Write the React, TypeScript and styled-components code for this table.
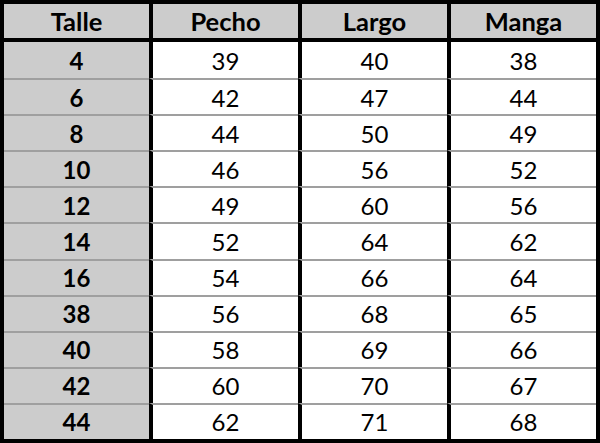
import { createGlobalStyle, styled } from "styled-components";

const sizes = [
  { talle: "4", pecho: 39, largo: 40, manga: 38 },
  { talle: "6", pecho: 42, largo: 47, manga: 44 },
  { talle: "8", pecho: 44, largo: 50, manga: 49 },
  { talle: "10", pecho: 46, largo: 56, manga: 52 },
  { talle: "12", pecho: 49, largo: 60, manga: 56 },
  { talle: "14", pecho: 52, largo: 64, manga: 62 },
  { talle: "16", pecho: 54, largo: 66, manga: 64 },
  { talle: "38", pecho: 56, largo: 68, manga: 65 },
  { talle: "40", pecho: 58, largo: 69, manga: 66 },
  { talle: "42", pecho: 60, largo: 70, manga: 67 },
  { talle: "44", pecho: 62, largo: 71, manga: 68 },
];

const headers = ["Talle", "Pecho", "Largo", "Manga"];

export default function App() {
  return (
    <>
      <GlobalStyle />
      <Sheet>
        {headers.map((h, i) => (
          <HeaderCell key={h} $divider={i > 0}>
            {h}
          </HeaderCell>
        ))}
        {sizes.map((row, r) => (
          <Row key={row.talle}>
            <Cell $label $rule={r > 0}>
              {row.talle}
            </Cell>
            <Cell $divider $rule={r > 0}>
              {row.pecho}
            </Cell>
            <Cell $divider $rule={r > 0}>
              {row.largo}
            </Cell>
            <Cell $divider $rule={r > 0}>
              {row.manga}
            </Cell>
          </Row>
        ))}
      </Sheet>
    </>
  );
}

const GlobalStyle = createGlobalStyle`
  html, body {
    margin: 0;
    padding: 0;
    background: #ffffff;
  }
  body {
    font-family: Lato, "Open Sans", sans-serif;
    color: #000;
  }
`;

const Sheet = styled.div`
  box-sizing: border-box;
  width: 600px;
  height: 443px;
  border: 4px solid #000;
  display: grid;
  grid-template-columns: 145px 149px 149px 149px;
  grid-template-rows: 38px repeat(11, 1fr);
`;

const Row = styled.div`
  display: contents;
`;

const HeaderCell = styled.div<{ $divider?: boolean }>`
  display: flex;
  align-items: center;
  justify-content: center;
  background: #cccccc;
  border-bottom: 4px solid #000;
  border-left: ${(p) => (p.$divider ? "4px solid #000" : "none")};
  font-size: 25.5px;
  font-weight: 700;
`;

const Cell = styled.div<{ $label?: boolean; $divider?: boolean; $rule?: boolean }>`
  display: flex;
  align-items: center;
  justify-content: center;
  background: ${(p) => (p.$label ? "#cccccc" : "#ffffff")};
  border-left: ${(p) => (p.$divider ? "4px solid #000" : "none")};
  border-top: ${(p) => (p.$rule ? "2px solid #9f9f9f" : "none")};
  font-size: 24px;
  font-weight: ${(p) => (p.$label ? 700 : 400)};
`;
